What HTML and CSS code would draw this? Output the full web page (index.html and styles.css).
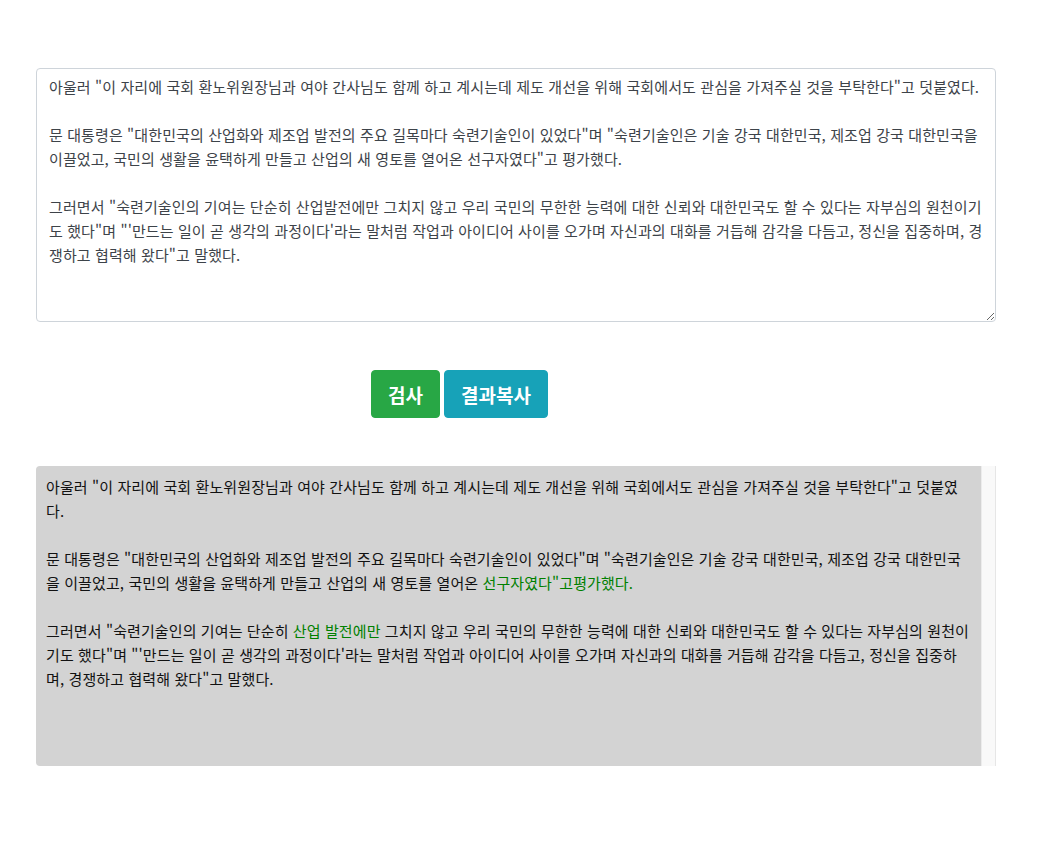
FILE: index.html
```html
<!DOCTYPE html>
<html lang="ko">
<head>
<meta charset="utf-8">
<title>검사</title>
<link rel="stylesheet" href="styles.css">
</head>
<body>
<div class="container">
  <textarea class="form-control" rows="10">아울러 "이 자리에 국회 환노위원장님과 여야 간사님도 함께 하고 계시는데 제도 개선을 위해 국회에서도 관심을 가져주실 것을 부탁한다"고 덧붙였다.

문 대통령은 "대한민국의 산업화와 제조업 발전의 주요 길목마다 숙련기술인이 있었다"며 "숙련기술인은 기술 강국 대한민국, 제조업 강국 대한민국을 이끌었고, 국민의 생활을 윤택하게 만들고 산업의 새 영토를 열어온 선구자였다"고 평가했다.

그러면서 "숙련기술인의 기여는 단순히 산업발전에만 그치지 않고 우리 국민의 무한한 능력에 대한 신뢰와 대한민국도 할 수 있다는 자부심의 원천이기도 했다"며 "'만드는 일이 곧 생각의 과정이다'라는 말처럼 작업과 아이디어 사이를 오가며 자신과의 대화를 거듭해 감각을 다듬고, 정신을 집중하며, 경쟁하고 협력해 왔다"고 말했다.</textarea>

  <div class="actions">
    <button class="btn btn-success">검사</button>
    <button class="btn btn-info">결과복사</button>
  </div>

  <div class="result">
    <div class="result-body">
      <p>아울러 "이 자리에 국회 환노위원장님과 여야 간사님도 함께 하고 계시는데 제도 개선을 위해 국회에서도 관심을 가져주실 것을 부탁한다"고 덧붙였다.</p>
      <p>문 대통령은 "대한민국의 산업화와 제조업 발전의 주요 길목마다 숙련기술인이 있었다"며 "숙련기술인은 기술 강국 대한민국, 제조업 강국 대한민국을 이끌었고, 국민의 생활을 윤택하게 만들고 산업의 새 영토를 열어온 <span class="fix">선구자였다"고평가했다.</span></p>
      <p>그러면서 "숙련기술인의 기여는 단순히 <span class="fix">산업 발전에만</span> 그치지 않고 우리 국민의 무한한 능력에 대한 신뢰와 대한민국도 할 수 있다는 자부심의 원천이기도 했다"며 "'만드는 일이 곧 생각의 과정이다'라는 말처럼 작업과 아이디어 사이를 오가며 자신과의 대화를 거듭해 감각을 다듬고, 정신을 집중하며, 경쟁하고 협력해 왔다"고 말했다.</p>
    </div>
    <div class="scroll-track"></div>
  </div>
</div>
</body>
</html>
```

FILE: styles.css
```css
html, body {
  margin: 0;
  padding: 0;
  background: #fff;
}

body {
  font-family: "Noto Sans CJK KR", "Noto Sans", sans-serif;
  font-size: 15px;
  line-height: 24px;
  color: #212529;
}

.container {
  width: 960px;
  padding: 68px 0 0 36px;
}

.form-control {
  display: block;
  box-sizing: border-box;
  width: 960px;
  height: 254px;
  margin: 0;
  padding: 6px 12px;
  font-family: inherit;
  font-size: 15px;
  letter-spacing: 0.1px;
  line-height: 24px;
  color: #3d4349;
  background: #fff;
  border: 1px solid #ced4da;
  border-radius: 4px;
  resize: vertical;
  overflow: hidden;
}

.actions {
  display: flex;
  gap: 4px;
  padding: 48px 0 0 335px;
}

.btn {
  height: 48px;
  padding: 0 16px;
  font-family: inherit;
  font-size: 19px;
  font-weight: 700;
  color: #fff;
  border: 1px solid transparent;
  border-radius: 4px;
}

.btn-success {
  background: #28a745;
  border-color: #28a745;
}

.btn-info {
  background: #17a2b8;
  border-color: #17a2b8;
}

.result {
  display: flex;
  height: 300px;
  margin-top: 48px;
}

.result-body {
  flex: 1;
  padding: 9px 10px;
  background: #d3d3d3;
  border-radius: 4px 0 0 4px;
  color: #111;
  font-size: 15px;
  letter-spacing: 0.1px;
  line-height: 24px;
}

.result-body p {
  margin: 0 0 24px;
}

.fix {
  color: #008000;
}

.scroll-track {
  width: 13px;
  background: #f9f9f9;
  border-left: 1px solid #ececec;
  border-right: 1px solid #e6e6e6;
}
```
